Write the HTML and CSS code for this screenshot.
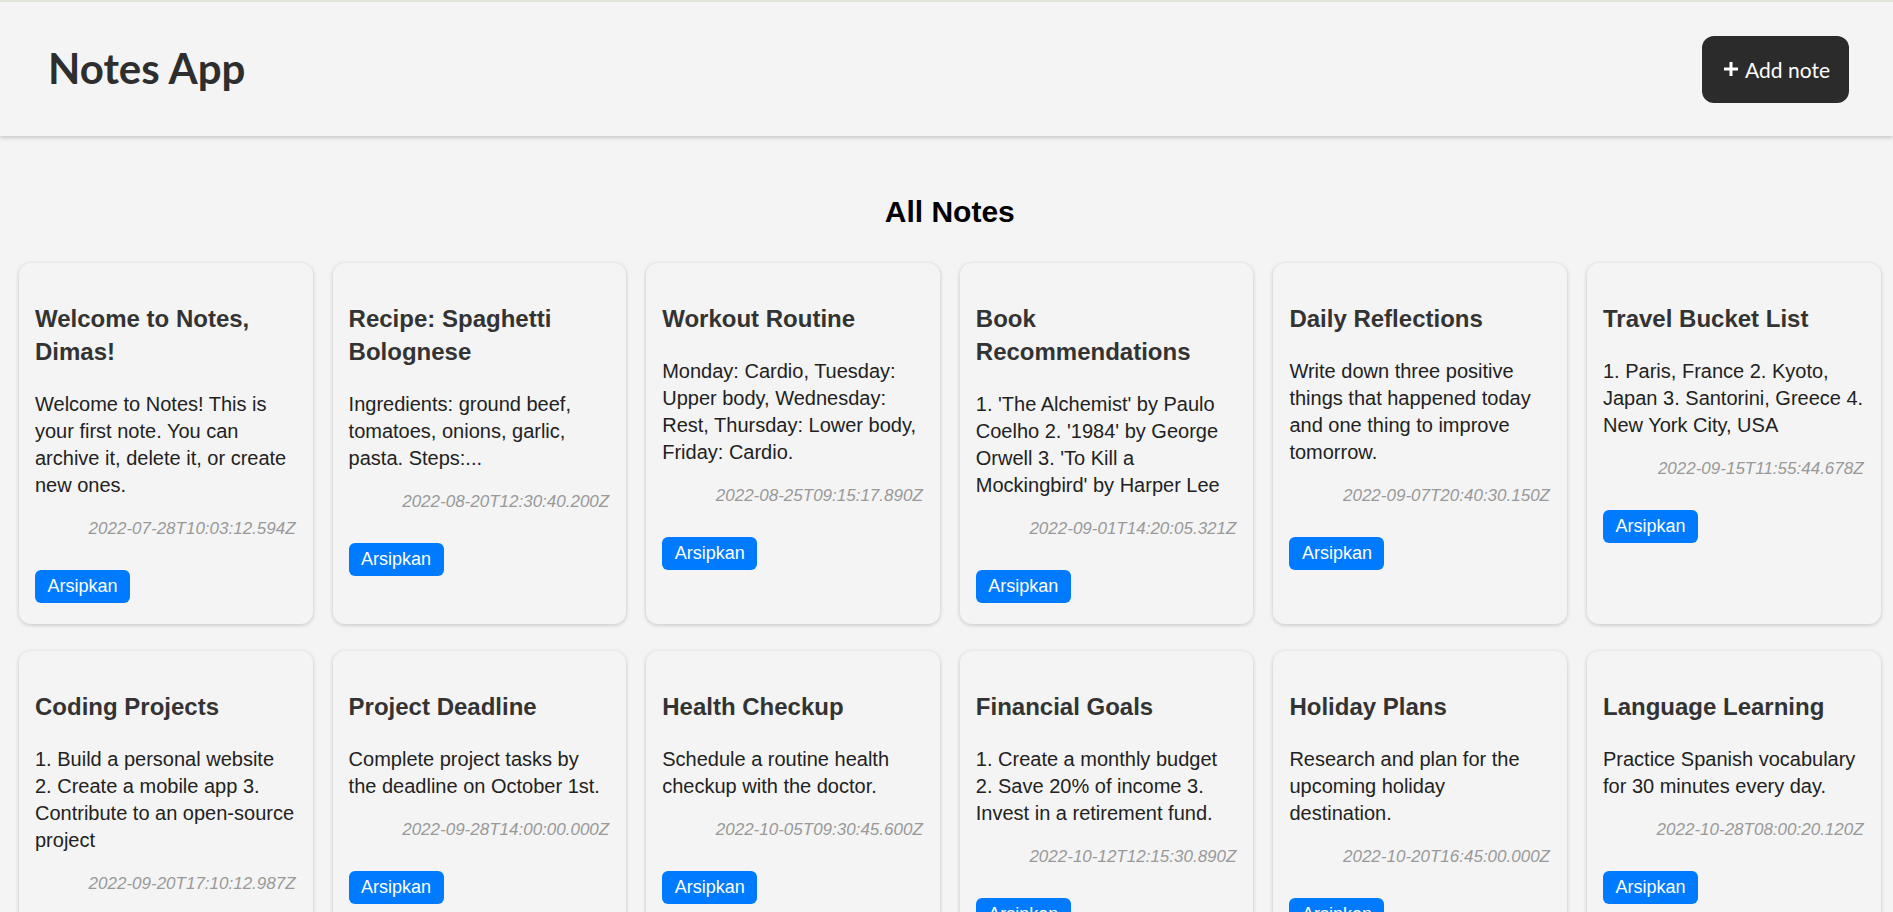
FILE: index.html
```html
<!DOCTYPE html>
<html lang="en">
<head>
<meta charset="utf-8">
<title>Notes App</title>
<link rel="stylesheet" href="styles.css">
</head>
<body>
<header class="app-header">
  <h1 class="app-title">Notes App</h1>
  <button class="add-btn" type="button">
    <svg class="add-icon" width="16" height="16" viewBox="0 0 16 16" aria-hidden="true"><path d="M8 1v14M1 8h14" stroke="#fff" stroke-width="3" fill="none"/></svg>
    <span>Add note</span>
  </button>
</header>
<main class="content">
  <h2 class="section-title">All Notes</h2>
  <div class="notes-grid">
    <article class="note-card">
      <h3 class="note-title">Welcome to Notes, Dimas!</h3>
      <p class="note-body">Welcome to Notes! This is your first note. You can archive it, delete it, or create new ones.</p>
      <p class="note-date">2022-07-28T10:03:12.594Z</p>
      <div class="note-actions"><button class="archive-btn" type="button">Arsipkan</button></div>
    </article>
    <article class="note-card">
      <h3 class="note-title">Recipe: Spaghetti Bolognese</h3>
      <p class="note-body">Ingredients: ground beef, tomatoes, onions, garlic, pasta. Steps:...</p>
      <p class="note-date">2022-08-20T12:30:40.200Z</p>
      <div class="note-actions"><button class="archive-btn" type="button">Arsipkan</button></div>
    </article>
    <article class="note-card">
      <h3 class="note-title">Workout Routine</h3>
      <p class="note-body">Monday: Cardio, Tuesday: Upper body, Wednesday: Rest, Thursday: Lower body, Friday: Cardio.</p>
      <p class="note-date">2022-08-25T09:15:17.890Z</p>
      <div class="note-actions"><button class="archive-btn" type="button">Arsipkan</button></div>
    </article>
    <article class="note-card">
      <h3 class="note-title">Book Recommendations</h3>
      <p class="note-body">1. 'The Alchemist' by Paulo Coelho 2. '1984' by George Orwell 3. 'To Kill a Mockingbird' by Harper Lee</p>
      <p class="note-date">2022-09-01T14:20:05.321Z</p>
      <div class="note-actions"><button class="archive-btn" type="button">Arsipkan</button></div>
    </article>
    <article class="note-card">
      <h3 class="note-title">Daily Reflections</h3>
      <p class="note-body">Write down three positive things that happened today and one thing to improve tomorrow.</p>
      <p class="note-date">2022-09-07T20:40:30.150Z</p>
      <div class="note-actions"><button class="archive-btn" type="button">Arsipkan</button></div>
    </article>
    <article class="note-card">
      <h3 class="note-title">Travel Bucket List</h3>
      <p class="note-body">1. Paris, France 2. Kyoto, Japan 3. Santorini, Greece 4. New York City, USA</p>
      <p class="note-date">2022-09-15T11:55:44.678Z</p>
      <div class="note-actions"><button class="archive-btn" type="button">Arsipkan</button></div>
    </article>
    <article class="note-card">
      <h3 class="note-title">Coding Projects</h3>
      <p class="note-body">1. Build a personal website 2. Create a mobile app 3. Contribute to an open-source project</p>
      <p class="note-date">2022-09-20T17:10:12.987Z</p>
      <div class="note-actions"><button class="archive-btn" type="button">Arsipkan</button></div>
    </article>
    <article class="note-card">
      <h3 class="note-title">Project Deadline</h3>
      <p class="note-body">Complete project tasks by the deadline on October 1st.</p>
      <p class="note-date">2022-09-28T14:00:00.000Z</p>
      <div class="note-actions"><button class="archive-btn" type="button">Arsipkan</button></div>
    </article>
    <article class="note-card">
      <h3 class="note-title">Health Checkup</h3>
      <p class="note-body">Schedule a routine health checkup with the doctor.</p>
      <p class="note-date">2022-10-05T09:30:45.600Z</p>
      <div class="note-actions"><button class="archive-btn" type="button">Arsipkan</button></div>
    </article>
    <article class="note-card">
      <h3 class="note-title">Financial Goals</h3>
      <p class="note-body">1. Create a monthly budget 2. Save 20% of income 3. Invest in a retirement fund.</p>
      <p class="note-date">2022-10-12T12:15:30.890Z</p>
      <div class="note-actions"><button class="archive-btn" type="button">Arsipkan</button></div>
    </article>
    <article class="note-card">
      <h3 class="note-title">Holiday Plans</h3>
      <p class="note-body">Research and plan for the upcoming holiday destination.</p>
      <p class="note-date">2022-10-20T16:45:00.000Z</p>
      <div class="note-actions"><button class="archive-btn" type="button">Arsipkan</button></div>
    </article>
    <article class="note-card">
      <h3 class="note-title">Language Learning</h3>
      <p class="note-body">Practice Spanish vocabulary for 30 minutes every day.</p>
      <p class="note-date">2022-10-28T08:00:20.120Z</p>
      <div class="note-actions"><button class="archive-btn" type="button">Arsipkan</button></div>
    </article>
  </div>
</main>
</body>
</html>
```

FILE: styles.css
```css
* {
  box-sizing: border-box;
}

body {
  margin: 0;
  background: #f4f4f4;
  font-family: "Liberation Sans", Arial, sans-serif;
  color: #222;
}

.app-header {
  position: relative;
  display: flex;
  align-items: center;
  justify-content: space-between;
  height: 136px;
  padding: 0 44px 0 48px;
  border-top: 2px solid #dfe6d7;
  background: #f4f4f4;
  box-shadow: 0 2px 4px rgba(0, 0, 0, 0.18);
}

.app-title {
  margin: -3px 0 0;
  font-family: Lato, "Liberation Sans", sans-serif;
  font-size: 42px;
  font-weight: 700;
  line-height: normal;
  color: #2e2e2e;
}

.add-btn {
  display: inline-flex;
  align-items: center;
  gap: 6px;
  height: 67px;
  padding: 0 19px 0 21px;
  border: 0;
  border-radius: 12px;
  background: #2b2b2b;
  color: #fff;
  font-family: Lato, "Liberation Sans", sans-serif;
  font-size: 21px;
}

.add-icon {
  display: block;
}

.content {
  padding: 0 12.4px 40px 19px;
}

.section-title {
  margin: 58px 0 32.5px;
  text-align: center;
  font-size: 30px;
  line-height: 36px;
  font-weight: 700;
  color: #000;
}

.notes-grid {
  display: grid;
  grid-template-columns: repeat(6, 1fr);
  column-gap: 20px;
  row-gap: 27.3px;
}

.note-card {
  padding: 16px 17px 21px 16px;
  border-radius: 12px;
  background: #f4f4f4;
  box-shadow: 0 1px 4px rgba(0, 0, 0, 0.2);
}

.note-title {
  margin: 23px 0 0;
  font-size: 24px;
  line-height: 33px;
  font-weight: 700;
  color: #333;
}

.note-body {
  margin: 23px 0 0;
  font-size: 20px;
  line-height: 27px;
  color: #222;
}

.note-date {
  margin: 20px 0 0;
  text-align: right;
  font-style: italic;
  font-size: 17px;
  line-height: 20px;
  color: #999;
}

.note-actions {
  margin-top: 31px;
}

.archive-btn {
  padding: 6px 12.5px;
  border: 0;
  border-radius: 6px;
  background: #007bff;
  color: #fff;
  font-family: "Liberation Sans", Arial, sans-serif;
  font-size: 18px;
  line-height: normal;
}
```
